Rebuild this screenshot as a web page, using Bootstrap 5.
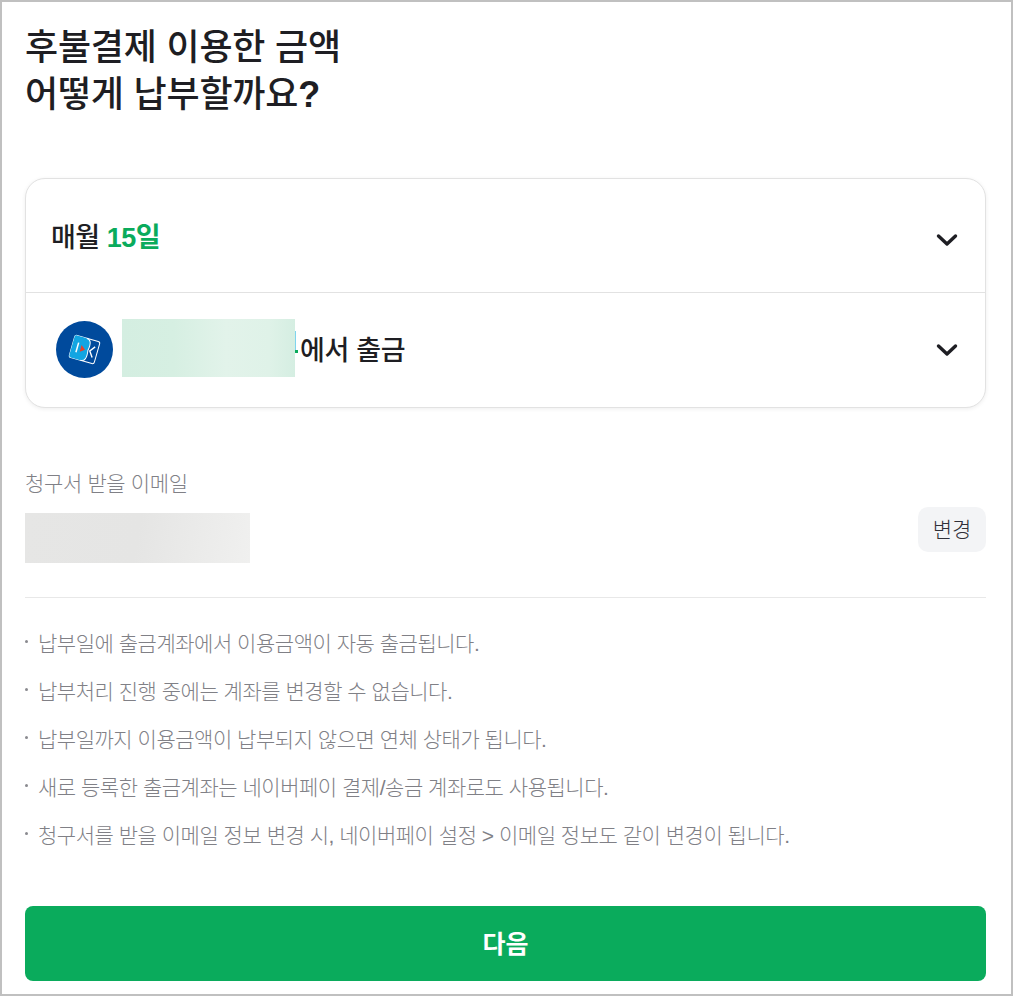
<!DOCTYPE html>
<html lang="ko">
<head>
<meta charset="UTF-8">
<title>후불결제 납부 설정</title>
<link href="https://cdn.jsdelivr.net/npm/bootstrap@5.3.2/dist/css/bootstrap.min.css" rel="stylesheet">
<style>
html, body { height: 100%; }
body { font-family: "Liberation Sans", "Noto Sans CJK KR", sans-serif; color: #1e1e23; background: #fff; }
.page-frame { height: 996px; border: 2px solid #c0c0c0; padding: 0 25px 0 23px; overflow: hidden; }
.page-title { font-size: 36px; line-height: 47px; font-weight: 500; letter-spacing: -0.2px; margin: 22px 0 60px; }
.pay-box { border: 1px solid #e2e2e2; border-radius: 20px; box-shadow: 0 1px 4px rgba(0,0,0,.07); height: 230px; }
.pay-row { padding: 0 27px 0 25px; font-size: 27px; font-weight: 500; letter-spacing: -0.5px; }
.pay-row-day { height: 114px; padding-top: 6px; border-bottom: 1px solid #e2e2e2; }
.pay-row-account { height: 114px; padding-left: 30px; padding-bottom: 2px; }
.pay-green { color: #0aab5c; }
.bank-logo { width: 57px; height: 57px; flex: none; }
.blur-account { width: 173px; height: 58px; flex: none; margin: 0 5px 2px 9px; position: relative; background: linear-gradient(90deg, #d4eee1 0%, #d6efe2 30%, #e2f3ea 60%, #dff2e8 85%, #d5eee2 100%); }
/* 가림 영역 뒤로 살짝 보이는 글자 끝부분 */
.blur-account::after { content: ""; position: absolute; left: 100%; top: 31px; width: 3px; height: 3px; background: #0aab5c; }
.blur-account::before { content: ""; position: absolute; left: 100%; top: 12px; width: 1px; height: 20px; background: #7fd4ee; }
.account-text { margin-top: 4px; letter-spacing: -0.3px; }
.mail-label { font-size: 21px; line-height: 30px; font-weight: 300; color: #808086; margin-top: 61px; letter-spacing: -0.35px; }
.blur-mail { width: 225px; height: 50px; background: linear-gradient(100deg, #e6e6e5 0%, #e5e5e4 50%, #f0f0ef 100%); }
.change-btn { width: 68px; height: 45px; background: #f3f4f6; border: 0; border-radius: 10px; font-size: 21px; font-weight: 300; color: #303038; padding: 0; margin-top: -6px; }
.mail-row { margin-top: 14px; padding-bottom: 34px; border-bottom: 1px solid #e8e8e8; }
.notice-list { list-style: none; padding: 0; margin: 22px 0 0; }
.notice-list li { font-size: 21px; line-height: 48px; font-weight: 300; color: #808086; letter-spacing: -0.48px; padding-left: 13px; position: relative; }
.notice-list li::before { content: ""; position: absolute; left: 0; top: 20px; width: 3px; height: 3px; border-radius: 50%; background: #8a8a8f; }
.next-btn { width: 100%; height: 75px; margin-top: 46px; padding-top: 4px; background: #0aab5c; border: 0; border-radius: 8px; color: #fff; font-size: 25px; font-weight: 700; }
.chevron { width: 22px; height: 14px; flex: none; margin-top: 2px; }
</style>
</head>
<body>
<div class="page-frame">
    <h1 class="page-title">후불결제 이용한 금액<br>어떻게 납부할까요<b>?</b></h1>

    <div class="pay-box bg-white">
        <div class="pay-row pay-row-day d-flex align-items-center justify-content-between">
            <span>매월 <span class="pay-green fw-bold">15일</span></span>
            <svg class="chevron" viewBox="0 0 22 14" fill="none" stroke="#1e1e23" stroke-width="3.4" stroke-linecap="round" stroke-linejoin="round"><path d="M2.5 3l8.500 8 8.500-8"/></svg>
        </div>
        <div class="pay-row pay-row-account d-flex align-items-center">
            <svg class="bank-logo" viewBox="0 0 57 57">
                <circle cx="28.5" cy="28.5" r="28.5" fill="#004a9c"/>
                <g transform="rotate(16 28.5 28.500)">
                    <rect x="15.500" y="17" width="26" height="23" rx="2" fill="none" stroke="#fff" stroke-width="1"/>
                    <path d="M15.500 19a2 2 0 0 1 2-2h10c4 0 6 3 4.500 11.500c1.500 8-.5 11.500-4.500 11.500h-10a2 2 0 0 1-2-2z" fill="#12a5e2"/>
                    <path d="M27.500 17c4 0 6 3 4.500 11.500c1.500 8-.5 11.500-4.500 11.500" fill="none" stroke="#fff" stroke-width="1"/>
                    <path d="M21 23.500v10" stroke="#fff" stroke-width="1.500"/>
                    <path d="M24.500 25l4.500 3.500-4.500 3.500z" fill="#e8402a"/>
                    <path d="M38 23l-4 5.500 4 5.500" fill="none" stroke="#fff" stroke-width="1.400"/>
                </g>
            </svg>
            <div class="blur-account"></div>
            <span class="account-text flex-grow-1">에서 출금</span>
            <svg class="chevron" viewBox="0 0 22 14" fill="none" stroke="#1e1e23" stroke-width="3.4" stroke-linecap="round" stroke-linejoin="round"><path d="M2.5 3l8.500 8 8.500-8"/></svg>
        </div>
    </div>

    <div class="mail-label">청구서 받을 이메일</div>
    <div class="mail-row d-flex justify-content-between align-items-start">
        <div class="blur-mail"></div>
        <button type="button" class="change-btn">변경</button>
    </div>

    <ul class="notice-list">
        <li>납부일에 출금계좌에서 이용금액이 자동 출금됩니다.</li>
        <li>납부처리 진행 중에는 계좌를 변경할 수 없습니다.</li>
        <li>납부일까지 이용금액이 납부되지 않으면 연체 상태가 됩니다.</li>
        <li>새로 등록한 출금계좌는 네이버페이 결제/송금 계좌로도 사용됩니다.</li>
        <li>청구서를 받을 이메일 정보 변경 시, 네이버페이 설정 &gt; 이메일 정보도 같이 변경이 됩니다.</li>
    </ul>

    <button type="button" class="next-btn">다음</button>
</div>
<script src="https://cdn.jsdelivr.net/npm/bootstrap@5.3.2/dist/js/bootstrap.bundle.min.js"></script>
</body>
</html>
